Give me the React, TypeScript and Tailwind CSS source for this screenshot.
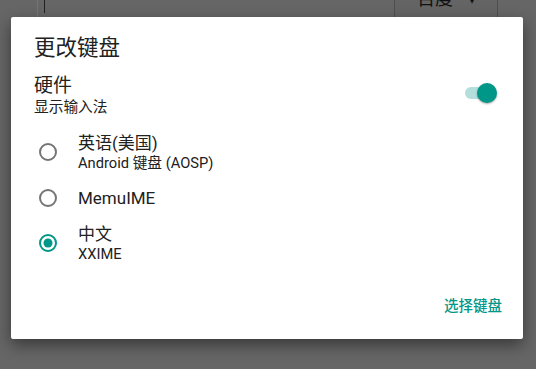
import React from "react";

const font = { fontFamily: "Roboto, 'Noto Sans CJK SC', sans-serif" };

function Radio({ checked }: { checked?: boolean }) {
  return (
    <svg width="22" height="22" viewBox="0 0 22 22">
      <circle cx="11" cy="11" r="8" fill="none" stroke={checked ? "#009688" : "#757575"} strokeWidth="2" />
      {checked && <circle cx="11" cy="11" r="4.5" fill="#009688" />}
    </svg>
  );
}

export default function App() {
  return (
    <div className="relative w-[536px] h-[369px] overflow-hidden bg-[#666666]" style={font}>
      {/* background page fragments */}
      <div className="absolute left-[37px] top-0 h-[17px] w-px bg-[#8a7346]" />
      <div className="absolute left-[44px] top-0 h-[13px] w-px bg-[#222]" />
      <div className="absolute left-[394px] top-0 h-[17px] w-[104px] border-x border-[#4e4e4e] bg-[#646464]">
        <div className="absolute left-[22px] top-[-11px] text-[18px] leading-[20px] text-[#111]">百度</div>
        <div className="absolute left-[73px] top-[-11px] text-[16px] leading-[20px] text-[#111]">▾</div>
      </div>

      {/* dialog */}
      <div className="absolute left-[11px] top-[17px] w-[512px] h-[322px] rounded-[2px] bg-white shadow-[0_6px_16px_rgba(0,0,0,0.45)] flex flex-col">
        <div className="pl-[23px] pt-[17px] text-[21.5px] leading-[28px] text-[#212121]">更改键盘</div>
        <div className="flex items-start pl-[23px] pr-[24px] mt-[13px]">
          <div className="flex-1 flex flex-col">
            <div className="text-[19px] leading-[22px] text-[#212121]">硬件</div>
            <div className="text-[14.7px] leading-[20px] text-[#212121]">显示输入法</div>
          </div>
          <div className="relative w-[36px] h-[22px] mt-[7px]">
            <div className="absolute left-[2px] top-[5px] w-[28px] h-[12px] rounded-full bg-[#b2dfdb]" />
            <div className="absolute left-[14px] top-[1px] w-[20px] h-[20px] rounded-full bg-[#009688] shadow-[0_1px_2px_rgba(0,0,0,0.35)]" />
          </div>
        </div>
        <div className="flex flex-col mt-[12px]">
          <div className="flex items-center h-[46px] pl-[26px]">
            <Radio />
            <div className="ml-[19px] flex flex-col">
              <div className="text-[17px] leading-[22px] text-[#212121]">英语(美国)</div>
              <div className="text-[14.7px] leading-[19px] text-[#212121]">Android 键盘 (AOSP)</div>
            </div>
          </div>
          <div className="flex items-center h-[45px] pl-[26px]">
            <Radio />
            <div className="ml-[19px] text-[17px] leading-[22px] text-[#212121]">MemuIME</div>
          </div>
          <div className="flex items-center h-[46px] pl-[26px]">
            <Radio checked />
            <div className="ml-[19px] flex flex-col">
              <div className="text-[17px] leading-[22px] text-[#212121]">中文</div>
              <div className="text-[14.7px] leading-[19px] text-[#212121]">XXIME</div>
            </div>
          </div>
        </div>
        <div className="mt-auto flex justify-end pr-[21px] pb-[22px]">
          <span className="text-[14.5px] leading-[20px] font-medium text-[#009688]">选择键盘</span>
        </div>
      </div>
    </div>
  );
}
